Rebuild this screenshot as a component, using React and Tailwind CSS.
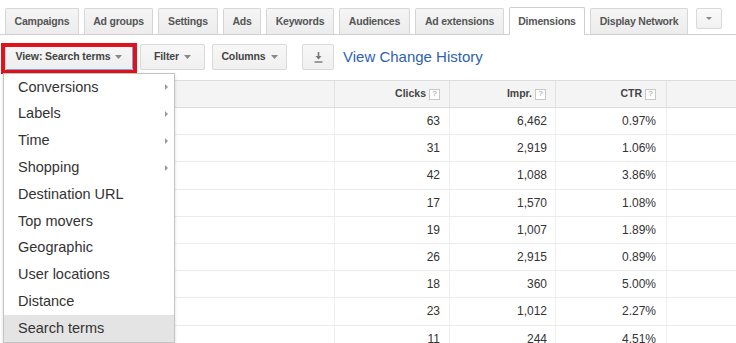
import React from "react";

const tabs = [
  ["Campaigns", 74],
  ["Ad groups", 69],
  ["Settings", 60],
  ["Ads", 38],
  ["Keywords", 68],
  ["Audiences", 71],
  ["Ad extensions", 89],
  ["Dimensions", 76, true],
  ["Display Network", 98],
];

const rows = [
  ["63", "6,462", "0.97%"],
  ["31", "2,919", "1.06%"],
  ["42", "1,088", "3.86%"],
  ["17", "1,570", "1.08%"],
  ["19", "1,007", "1.89%"],
  ["26", "2,915", "0.89%"],
  ["18", "360", "5.00%"],
  ["23", "1,012", "2.27%"],
  ["11", "244", "4.51%"],
];

const menu = [
  ["Conversions", true],
  ["Labels", true],
  ["Time", true],
  ["Shopping", true],
  ["Destination URL"],
  ["Top movers"],
  ["Geographic"],
  ["User locations"],
  ["Distance"],
  ["Search terms", false, true],
];

function Caret() {
  return (
    <svg width="7" height="4" viewBox="0 0 7 4" className="ml-[5px] shrink-0">
      <path d="M0 0 H7 L3.5 4 Z" fill="#888" />
    </svg>
  );
}

function Help() {
  return (
    <span className="ml-[3px] inline-flex h-[11px] w-[11px] items-center justify-center border border-[#c8c8c8] bg-white text-[8px] font-normal leading-none text-[#999]">
      ?
    </span>
  );
}

function Btn({ children, className = "" }) {
  return (
    <div
      className={
        "flex h-[26px] items-center justify-center rounded-[2px] border border-[#d9d9d9] bg-gradient-to-b from-[#f7f7f7] to-[#f0f0f0] text-[10.5px] font-bold tracking-[-0.1px] text-[#444] " +
        className
      }
    >
      {children}
    </div>
  );
}

export default function App() {
  return (
    <div
      className="relative h-[343px] w-[736px] overflow-hidden bg-white"
      style={{ fontFamily: '"Liberation Sans", Arial, sans-serif' }}
    >
      {/* Tabs */}
      <div className="flex h-[35px] items-end border-b border-[#cfcfcf] pl-[5px]">
        {tabs.map(([label, w, active], i) => (
          <div
            key={label}
            style={{ width: w }}
            className={
              (i > 0 ? "ml-[5px] " : "") +
              (active
                ? "relative top-[1px] flex h-[28px] items-center justify-center rounded-t-[2px] border border-b-0 border-[#cfcfcf] bg-white"
                : "flex h-[26px] items-center justify-center rounded-t-[2px] border border-b-0 border-[#d6d6d6] bg-gradient-to-b from-[#f5f5f5] to-[#ececec]") +
              " text-[10.5px] font-bold tracking-[-0.2px] text-[#555]"
            }
          >
            {label}
          </div>
        ))}
        <div className="mb-[5px] ml-[8px] flex h-[21px] w-[26px] items-center justify-center rounded-[2px] border border-[#d9d9d9] bg-gradient-to-b from-[#fafafa] to-[#f1f1f1]">
          <svg width="6" height="3" viewBox="0 0 6 3">
            <path d="M0 0 H6 L3 3 Z" fill="#888" />
          </svg>
        </div>
      </div>

      {/* Toolbar */}
      <div className="mt-[9px] flex items-center">
        <div className="relative ml-[5px] w-[128px]">
          <div className="flex h-[26px] items-center justify-center rounded-[2px] border border-[#d9d9d9] border-b-[#7fa2dc] border-r-[#7fa2dc] bg-gradient-to-b from-[#f7f7f7] to-[#eeeeee] text-[10.5px] font-bold tracking-[-0.1px] text-[#444]">
            View: Search terms
            <Caret />
          </div>
          <div className="pointer-events-none absolute -bottom-[4px] -left-[4px] -right-[4px] -top-[1px] border-[4px] border-[#e0121c]" />
        </div>
        <Btn className="ml-[7px] w-[65px]">
          Filter
          <Caret />
        </Btn>
        <Btn className="ml-[7px] w-[75px]">
          Columns
          <Caret />
        </Btn>
        <Btn className="ml-[15px] w-[32px]">
          <svg width="9" height="11" viewBox="0 0 9 11">
            <path d="M4.5 0 V6" stroke="#777" strokeWidth="1.6" />
            <path d="M1.5 4 L4.5 7.5 L7.5 4 Z" fill="#777" />
            <path d="M0.5 10 H8.5" stroke="#777" strokeWidth="1.4" />
          </svg>
        </Btn>
        <div className="ml-[9px] text-[15px] text-[#2f5fb3]">View Change History</div>
      </div>

      {/* Table */}
      <div className="mt-[10px] ml-[5px] text-[12px] text-[#333]">
        <div className="flex h-[28px] items-center border-y border-[#dcdcdc] bg-[#f4f4f4] text-[10.5px] font-bold text-[#444]">
          <div className="h-full w-[330px] border-r border-[#e2e2e2]" />
          <div className="flex h-full w-[115px] items-center justify-end border-r border-[#e2e2e2] pr-[9px]">
            Clicks
            <Help />
          </div>
          <div className="flex h-full w-[106px] items-center justify-end border-r border-[#e2e2e2] pr-[9px]">
            Impr.
            <Help />
          </div>
          <div className="flex h-full w-[111px] items-center justify-end border-r border-[#e2e2e2] pr-[10px]">
            CTR
            <Help />
          </div>
          <div className="h-full flex-1" />
        </div>
        {rows.map((r, i) => (
          <div key={i} className="flex h-[27.2px] items-center border-b border-[#ececec]">
            <div className="h-full w-[330px] border-r border-[#f0f0f0]" />
            <div className="flex h-full w-[115px] items-center justify-end border-r border-[#f0f0f0] pr-[9px]">
              {r[0]}
            </div>
            <div className="flex h-full w-[106px] items-center justify-end border-r border-[#f0f0f0] pr-[8px]">
              {r[1]}
            </div>
            <div className="flex h-full w-[111px] items-center justify-end border-r border-[#f0f0f0] pr-[10px]">
              {r[2]}
            </div>
            <div className="h-full flex-1" />
          </div>
        ))}
      </div>

      {/* Dropdown menu */}
      <div className="absolute left-[3px] top-[73px] w-[172px] border border-[#c4c4c4] bg-white shadow-[0_1px_3px_rgba(0,0,0,0.15)]">
        {menu.map(([label, arrow, sel]) => (
          <div
            key={label}
            className={
              "flex h-[26.8px] items-center justify-between pl-[14px] pr-[6px] text-[14.5px] text-[#333] " +
              (sel ? "bg-[#e4e4e4]" : "")
            }
          >
            <span>{label}</span>
            {arrow && (
              <svg width="3" height="6" viewBox="0 0 3 6">
                <path d="M0 0 L3 3 L0 6 Z" fill="#999" />
              </svg>
            )}
          </div>
        ))}
      </div>
    </div>
  );
}
